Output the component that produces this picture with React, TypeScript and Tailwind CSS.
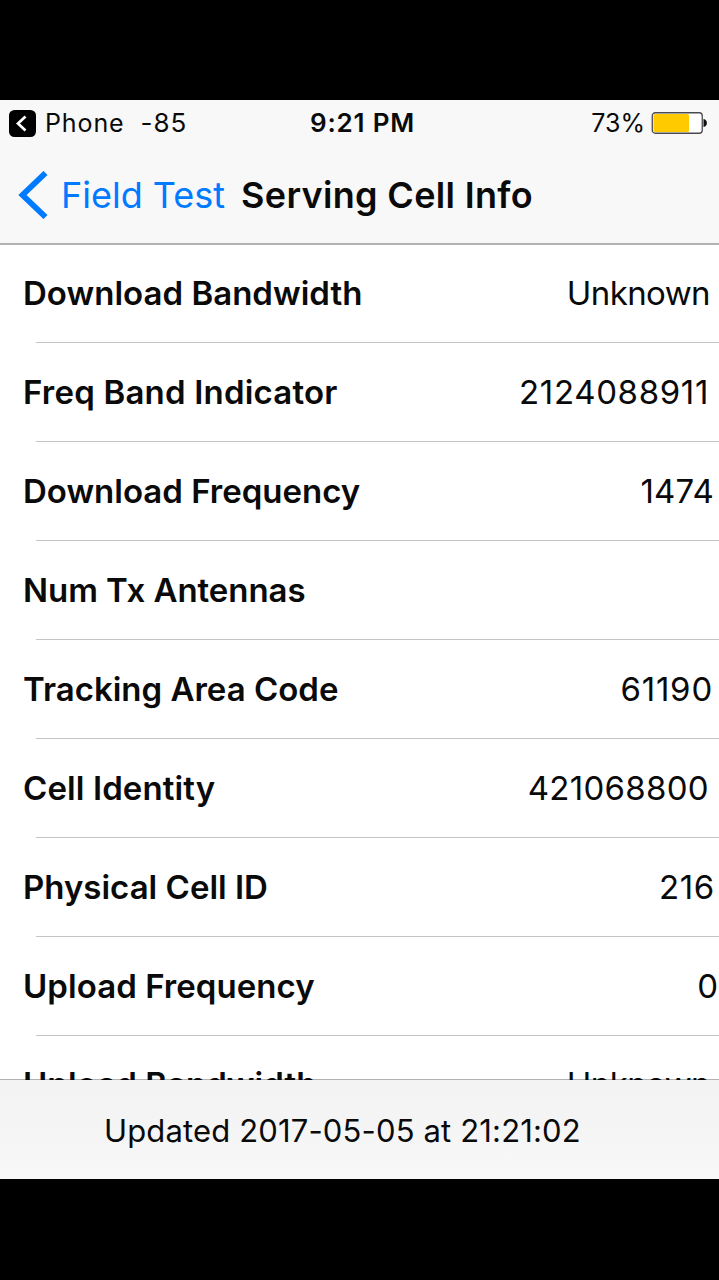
import React from "react"

type CellInfo = {
  label: string
  value: string
  labelClass: string
  valueClass: string
}

const cells: CellInfo[] = [
  {
    label: "Download Bandwidth",
    value: "Unknown",
    labelClass: "tracking-[0.02px]",
    valueClass: "mr-[9px] tracking-[-0.6px]",
  },
  {
    label: "Freq Band Indicator",
    value: "2124088911",
    labelClass: "tracking-[0.2px]",
    valueClass: "mr-[10px] tracking-[0.65px]",
  },
  {
    label: "Download Frequency",
    value: "1474",
    labelClass: "",
    valueClass: "mr-[5px] tracking-[0.2px]",
  },
  {
    label: "Num Tx Antennas",
    value: "",
    labelClass: "tracking-[-0.05px]",
    valueClass: "",
  },
  {
    label: "Tracking Area Code",
    value: "61190",
    labelClass: "",
    valueClass: "mr-[6px] tracking-[0.8px]",
  },
  {
    label: "Cell Identity",
    value: "421068800",
    labelClass: "tracking-[0.1px]",
    valueClass: "mr-[10px] tracking-[0.3px]",
  },
  {
    label: "Physical Cell ID",
    value: "216",
    labelClass: "",
    valueClass: "mr-[4px] tracking-[0.7px]",
  },
  {
    label: "Upload Frequency",
    value: "0",
    labelClass: "tracking-[0.05px]",
    valueClass: "mr-[1px]",
  },
  {
    label: "Upload Bandwidth",
    value: "Unknown",
    labelClass: "tracking-[0.05px]",
    valueClass: "mr-[9px] tracking-[-0.6px]",
  },
]

const Battery = () => (
  <svg className="ml-[6px] h-[22px] w-[56px]" viewBox="0 0 56 22" fill="none">
    <rect x="1.25" y="0.75" width="50" height="20.5" rx="3" fill="#fff" stroke="#4a4a4e" strokeWidth="1.3" />
    <rect x="2.5" y="2" width="35.5" height="18" rx="1.5" fill="#ffcb00" />
    <path d="M52.5 7c2.4.4 3.4 2 3.4 4s-1 3.6-3.4 4z" fill="#111" />
  </svg>
)

const StatusBar = () => (
  <div className="flex h-[48px] items-center pb-[2px] text-[25px] leading-none">
    <div className="flex w-[310px] items-center pl-[9px]">
      <svg className="h-[27px] w-[27px]" viewBox="0 0 27 27" fill="none">
        <rect width="27" height="27" rx="5.5" fill="#000" />
        <path d="M16.5 6.5L9 13.5l7.5 7" stroke="#fff" strokeWidth="2.7" />
      </svg>
      <span className="ml-[9px] tracking-[0.9px]">Phone</span>
      <span className="ml-[16px] text-[26px] tracking-[0.9px]">-85</span>
    </div>
    <span className="text-[26px] font-semibold tracking-[0.8px]">9:21 PM</span>
    <div className="flex flex-1 items-center justify-end pr-[12px]">
      <span>73%</span>
      <Battery />
    </div>
  </div>
)

const NavBar = () => (
  <div className="flex h-[97px] items-center border-b-2 border-[#b2b2b4] pb-px pl-[18px] text-[36px] leading-none">
    <svg className="h-[48px] w-[30px]" viewBox="0 0 30 48" fill="none">
      <path d="M27.5 2L4.5 24l23 22" stroke="#007aff" strokeWidth="5.8" />
    </svg>
    <span className="ml-[13px] text-[#007aff]">Field Test</span>
    <h1 className="ml-[16px] font-semibold tracking-[0.32px]">Serving Cell Info</h1>
  </div>
)

const CellRow = ({ label, value, labelClass, valueClass }: CellInfo) => (
  <li className="h-[99px] shrink-0 last:-mt-px">
    <div className="flex h-[97px] items-center justify-between pl-[23px] text-[33px] leading-none">
      <span className={`font-semibold ${labelClass}`}>{label}</span>
      <span className={valueClass}>{value}</span>
    </div>
    <div className="ml-[36px] h-px bg-[#c4c4c7]" />
  </li>
)

const App = () => {
  return (
    <div className="h-[1280px] w-[719px] overflow-hidden bg-black pt-[100px] font-['Inter',sans-serif] whitespace-nowrap text-[#0a0a0a]">
      <div className="flex h-[1079px] flex-col bg-white">
        <header className="h-[145px] shrink-0 bg-[#f8f8f9]">
          <StatusBar />
          <NavBar />
        </header>
        <ul className="flex h-[835px] shrink-0 flex-col overflow-hidden">
          {cells.map((cell) => (
            <CellRow key={cell.label} {...cell} />
          ))}
        </ul>
        {/* hairline is translucent so the last row shows through it */}
        <footer className="-mt-px flex h-[100px] shrink-0 items-center border-t border-black/30 bg-linear-to-b from-[#f2f2f3] to-[#f8f8f8] bg-clip-padding pt-px pl-[104px] text-[31px] leading-none tracking-[0.15px]">
          Updated 2017-05-05 at 21:21:02
        </footer>
      </div>
    </div>
  )
}

export default App
